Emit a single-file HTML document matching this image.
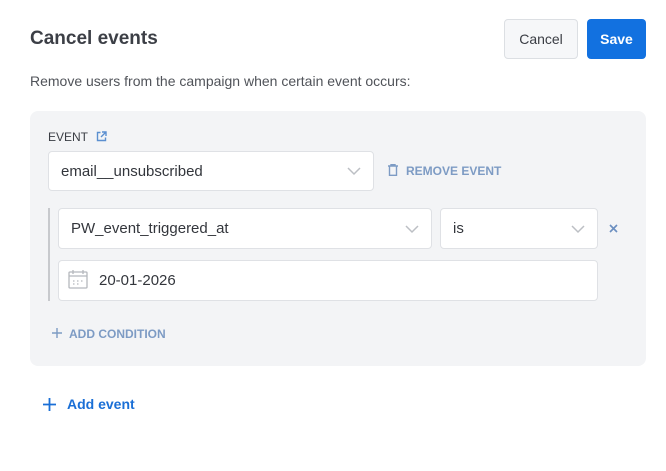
<!DOCTYPE html>
<html><head><style>
*{box-sizing:border-box;margin:0;padding:0}
body{width:666px;height:471px;background:#fff;font-family:"Liberation Sans",Arial,sans-serif;position:relative;overflow:hidden;color:#3a3d44}
.a{position:absolute}
.sel{position:absolute;background:#fff;border:1px solid #dfe1e5;border-radius:4px;font-size:15px;color:#33363c;padding-left:12px;display:flex;align-items:center}
.chev{position:absolute;right:12px;top:50%;margin-top:-6px}
</style></head><body>
<div class="a" style="left:30px;top:28px;font-size:19px;font-weight:bold;color:#3c3f46">Cancel events</div>
<div class="a" style="left:504px;top:19px;width:74px;height:40px;background:#f6f7f9;border:1px solid #dcdfe3;border-radius:4px;font-size:14px;color:#3a3d44;display:flex;align-items:center;justify-content:center">Cancel</div>
<div class="a" style="left:587px;top:19px;width:59px;height:40px;background:#1271e0;border-radius:4px;font-size:14px;font-weight:bold;color:#fff;display:flex;align-items:center;justify-content:center">Save</div>
<div class="a" style="left:30px;top:73px;font-size:14px;color:#505359">Remove users from the campaign when certain event occurs:</div>
<div class="a" style="left:30px;top:111px;width:616px;height:255px;background:#f3f4f6;border-radius:8px"></div>
<div class="a" style="left:48px;top:130px;font-size:12px;color:#3a3d44">EVENT</div>
<svg class="a" style="left:96px;top:131px" width="11" height="11" viewBox="0 0 11 11" fill="none" stroke="#5b8fd0" stroke-width="1.4"><path d="M4.5 1.5H1.5v8h8V6.5M6 1h4v4M10 1L5 6"/></svg>
<div class="sel" style="left:48px;top:151px;width:326px;height:40px">email__unsubscribed<svg class="chev" width="14" height="12" viewBox="0 0 14 12"><path d="M1 3l6 6 6-6" fill="none" stroke="#bcbfc4" stroke-width="1.5"/></svg></div>
<svg class="a" style="left:388px;top:164px" width="10" height="12" viewBox="0 0 10 12" fill="none" stroke="#7d9bc4" stroke-width="1.4"><path d="M0 2h10M3 2V0.7h4V2M1.5 2.5v8.8h7V2.5"/></svg>
<div class="a" style="left:406px;top:164px;font-size:12px;font-weight:bold;color:#7d9bc4">REMOVE EVENT</div>
<div class="a" style="left:48px;top:208px;width:2px;height:93px;background:#c7c9cd"></div>
<div class="sel" style="left:58px;top:208px;width:374px;height:41px">PW_event_triggered_at<svg class="chev" width="14" height="12" viewBox="0 0 14 12"><path d="M1 3l6 6 6-6" fill="none" stroke="#bcbfc4" stroke-width="1.5"/></svg></div>
<div class="sel" style="left:440px;top:208px;width:158px;height:41px">is<svg class="chev" width="14" height="12" viewBox="0 0 14 12"><path d="M1 3l6 6 6-6" fill="none" stroke="#bcbfc4" stroke-width="1.5"/></svg></div>
<svg class="a" style="left:609px;top:224px" width="9" height="9" viewBox="0 0 9 9"><path d="M1 1l7 7M8 1L1 8" stroke="#6b8fc0" stroke-width="1.6"/></svg>
<div class="sel" style="left:58px;top:260px;width:540px;height:41px;padding-left:40px">20-01-2026</div>
<svg class="a" style="left:68px;top:269px" width="20" height="20" viewBox="0 0 20 20" fill="none" stroke="#b5b8bd" stroke-width="1.3"><rect x="1" y="3" width="18" height="16" rx="1"/><path d="M1 7h18M5 1v4M15 1v4"/><path d="M5 12h1.5M9 12h1.5M13 12h1.5M5 15h1.5M9 15h1.5" stroke-width="1.2"/></svg>
<svg class="a" style="left:52px;top:328px" width="10" height="10" viewBox="0 0 10 10"><path d="M5 0v10M0 5h10" stroke="#7d9bc4" stroke-width="1.4"/></svg>
<div class="a" style="left:69px;top:327px;font-size:12px;font-weight:bold;color:#7d9bc4">ADD CONDITION</div>
<svg class="a" style="left:43px;top:398px" width="13" height="13" viewBox="0 0 13 13"><path d="M6.5 0v13M0 6.5h13" stroke="#1a6fd6" stroke-width="1.8"/></svg>
<div class="a" style="left:67px;top:396px;font-size:14px;font-weight:bold;color:#1a6fd6">Add event</div>
</body></html>
